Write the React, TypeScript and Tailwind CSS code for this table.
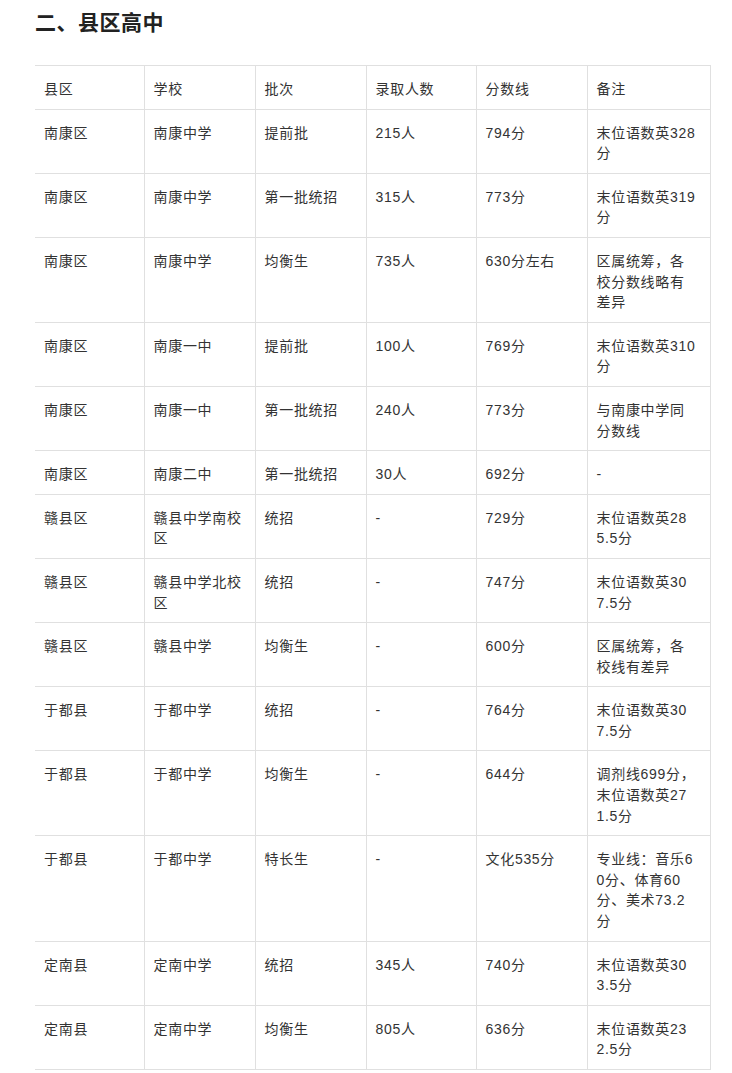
import React from "react";

const header = ["县区", "学校", "批次", "录取人数", "分数线", "备注"];

const rows: string[][] = [
  ["南康区", "南康中学", "提前批", "215人", "794分", "末位语数英328|分"],
  ["南康区", "南康中学", "第一批统招", "315人", "773分", "末位语数英319|分"],
  ["南康区", "南康中学", "均衡生", "735人", "630分左右", "区属统筹，各|校分数线略有|差异"],
  ["南康区", "南康一中", "提前批", "100人", "769分", "末位语数英310|分"],
  ["南康区", "南康一中", "第一批统招", "240人", "773分", "与南康中学同|分数线"],
  ["南康区", "南康二中", "第一批统招", "30人", "692分", "-"],
  ["赣县区", "赣县中学南校|区", "统招", "-", "729分", "末位语数英28|5.5分"],
  ["赣县区", "赣县中学北校|区", "统招", "-", "747分", "末位语数英30|7.5分"],
  ["赣县区", "赣县中学", "均衡生", "-", "600分", "区属统筹，各|校线有差异"],
  ["于都县", "于都中学", "统招", "-", "764分", "末位语数英30|7.5分"],
  ["于都县", "于都中学", "均衡生", "-", "644分", "调剂线699分，|末位语数英27|1.5分"],
  ["于都县", "于都中学", "特长生", "-", "文化535分", "专业线：音乐6|0分、体育60|分、美术73.2|分"],
  ["定南县", "定南中学", "统招", "345人", "740分", "末位语数英30|3.5分"],
  ["定南县", "定南中学", "均衡生", "805人", "636分", "末位语数英23|2.5分"],
];

function Cell({ text }: { text: string }) {
  return (
    <td className="align-top px-[9px] pt-[13px] pb-[9px] border-b border-r border-[#e0e0e0]">
      {text.split("|").map((l, i) => (
        <span key={i} className="block whitespace-nowrap">
          {l}
        </span>
      ))}
    </td>
  );
}

export default function App() {
  return (
    <div
      className="bg-white w-[732px] min-h-[1073px] pl-[35px] pt-[8px] text-[#333]"
      style={{ fontFamily: '"Liberation Sans", "Noto Sans CJK SC", sans-serif' }}
    >
      <h2 className="text-[21px] font-bold leading-[30px] text-[#222] tracking-[0.5px]">二、县区高中</h2>
      <table className="mt-[27px] w-[675px] table-fixed border-collapse border-t border-[#e0e0e0] text-[14px] leading-[20.6px] tracking-[0.7px]">
        <colgroup>
          <col className="w-[109px]" />
          <col className="w-[111px]" />
          <col className="w-[111px]" />
          <col className="w-[110px]" />
          <col className="w-[111px]" />
          <col className="w-[123px]" />
        </colgroup>
        <tbody>
          <tr>
            {header.map((h, i) => (
              <Cell key={i} text={h} />
            ))}
          </tr>
          {rows.map((r, ri) => (
            <tr key={ri}>
              {r.map((c, ci) => (
                <Cell key={ci} text={c} />
              ))}
            </tr>
          ))}
        </tbody>
      </table>
    </div>
  );
}
